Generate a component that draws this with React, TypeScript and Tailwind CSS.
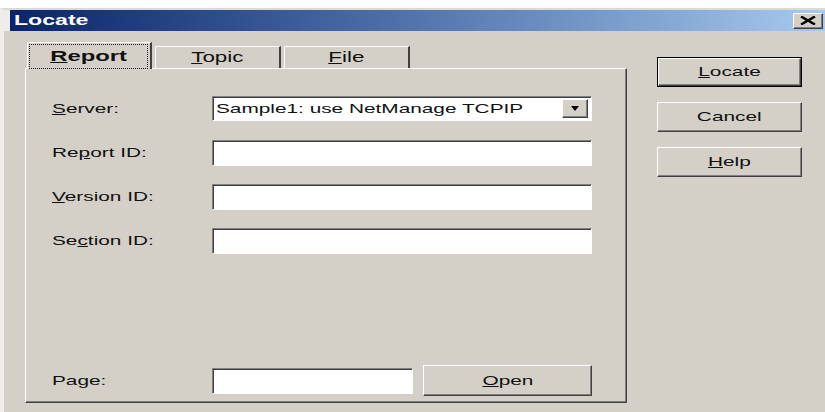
import type { ReactNode } from "react"

// Text in this dialog is drawn wide, so every run of text is stretched sideways.
function Wide({ children, center = false, className = "" }: { children: ReactNode; center?: boolean; className?: string }) {
    return (
        <span className={`inline-block scale-x-[1.6] whitespace-nowrap ${center ? "origin-center" : "origin-left"} ${className}`}>
            {children}
        </span>
    )
}

const raised = "border border-t-white border-l-white border-b-[#404040] border-r-[#404040] shadow-[inset_-1px_-1px_0_#808080]"
const sunken = "border border-t-[#808080] border-l-[#808080] border-b-white border-r-white shadow-[inset_1px_1px_0_#404040] bg-white"

function Button({ children, isDefault = false, className = "" }: { children: ReactNode; isDefault?: boolean; className?: string }) {
    const face = (
        <div className={`${raised} flex h-full w-full items-center justify-center bg-[#d4d0c8] text-[13px] text-[#111]`}>
            <Wide center>{children}</Wide>
        </div>
    )
    if (isDefault) {
        return <div className={`border border-black ${className}`}>{face}</div>
    }
    return <div className={className}>{face}</div>
}

function FieldRow({ label, children }: { label: ReactNode; children: ReactNode }) {
    return (
        <div className="flex h-[25px] items-center">
            <div className="w-[160px] text-[13px] text-[#111]">
                <Wide>{label}</Wide>
            </div>
            {children}
        </div>
    )
}

function Tab({ children, active = false }: { children: ReactNode; active?: boolean }) {
    if (active) {
        return (
            <div className="h-[27px] w-[125px] rounded-tl-[2px] border-l border-t border-l-white border-t-white border-r-2 border-r-[#404040] bg-[#d4d0c8] pl-[1px] pr-[2px] pt-[1px]">
                <div className="flex h-full items-center justify-center border border-dotted border-[#222] text-[14px] font-bold text-[#111]">
                    <span className="inline-block origin-center scale-x-[1.7] whitespace-nowrap">{children}</span>
                </div>
            </div>
        )
    }
    return (
        <div className="mb-px flex h-[22px] w-[126px] items-center justify-center rounded-tl-[2px] border-l border-t border-l-white border-t-white border-r-2 border-r-[#404040] bg-[#d4d0c8] text-[14px] text-[#111]">
            <Wide center>{children}</Wide>
        </div>
    )
}

export default function App() {
    return (
        <div className="h-[412px] w-[825px] overflow-hidden bg-white pt-[8px] font-['Liberation_Sans',Arial,sans-serif]">
            <div className="flex h-[404px] flex-col border-l-4 border-t-2 border-l-[#eeede9] border-t-[#dcdad5] bg-[#d4d0c8]">
                {/* caption */}
                <div className="flex h-[21px] bg-[#eeede9] pl-[6px]">
                    <div className="flex flex-1 items-center bg-gradient-to-r from-[#0a246a] to-[#a6caf0] pl-[4px] pr-[2px]">
                        <span className="flex-1 text-[14px] font-bold text-white">
                            <span className="inline-block origin-left scale-x-[1.65]">Locate</span>
                        </span>
                        <div className={`${raised} flex h-[16px] w-[30px] items-center justify-center bg-[#d4d0c8]`}>
                            <svg width="18" height="9" viewBox="0 0 18 9">
                                <path d="M2 0.5 L16 8.5 M16 0.5 L2 8.5" stroke="#000" strokeWidth="2.4" />
                            </svg>
                        </div>
                    </div>
                </div>

                <div className="flex pl-[21px] pt-[11px]">
                    {/* tab control */}
                    <div className="flex w-[602px] flex-col">
                        <div className="relative z-10 -mb-px flex items-end gap-[3px] pl-[2px]">
                            <Tab active>
                                <u>R</u>eport
                            </Tab>
                            <Tab>
                                <u>T</u>opic
                            </Tab>
                            <Tab>
                                <u>F</u>ile
                            </Tab>
                        </div>
                        <div className={`${raised} flex h-[335px] flex-col bg-[#d4d0c8] pb-[6px] pl-[26px] pt-[27px]`}>
                            <div className="flex flex-col gap-[19px]">
                                <FieldRow
                                    label={
                                        <>
                                            <u>S</u>erver:
                                        </>
                                    }
                                >
                                    <div className={`${sunken} flex h-[25px] w-[380px] items-center pl-[3px] pr-[3px]`}>
                                        <span className="flex-1 text-[13px] text-[#111]">
                                            <Wide>Sample1: use NetManage TCPIP</Wide>
                                        </span>
                                        <div className={`${raised} flex h-[19px] w-[26px] items-center justify-center bg-[#d4d0c8]`}>
                                            <svg width="10" height="5" viewBox="0 0 10 5">
                                                <path d="M1 0 H9 L5 5 Z" fill="#000" />
                                            </svg>
                                        </div>
                                    </div>
                                </FieldRow>
                                <FieldRow
                                    label={
                                        <>
                                            Re<u>p</u>ort ID:
                                        </>
                                    }
                                >
                                    <div className={`${sunken} h-[26px] w-[380px]`} />
                                </FieldRow>
                                <FieldRow
                                    label={
                                        <>
                                            <u>V</u>ersion ID:
                                        </>
                                    }
                                >
                                    <div className={`${sunken} h-[26px] w-[380px]`} />
                                </FieldRow>
                                <FieldRow
                                    label={
                                        <>
                                            Se<u>c</u>tion ID:
                                        </>
                                    }
                                >
                                    <div className={`${sunken} h-[26px] w-[380px]`} />
                                </FieldRow>
                            </div>

                            <div className="flex-1" />

                            <div className="flex h-[31px] items-center">
                                <div className="w-[160px] text-[13px] text-[#111]">
                                    <Wide>Page:</Wide>
                                </div>
                                <div className={`${sunken} h-[26px] w-[201px]`} />
                                <Button className="ml-[10px] h-[31px] w-[169px]">
                                    <u>O</u>pen
                                </Button>
                            </div>
                        </div>
                    </div>

                    {/* command buttons */}
                    <div className="ml-[30px] flex w-[145px] flex-col gap-[15px] pt-[15px]">
                        <Button isDefault className="h-[30px]">
                            <u>L</u>ocate
                        </Button>
                        <Button className="h-[30px]">Cancel</Button>
                        <Button className="h-[30px]">
                            <u>H</u>elp
                        </Button>
                    </div>
                </div>
            </div>
        </div>
    )
}
